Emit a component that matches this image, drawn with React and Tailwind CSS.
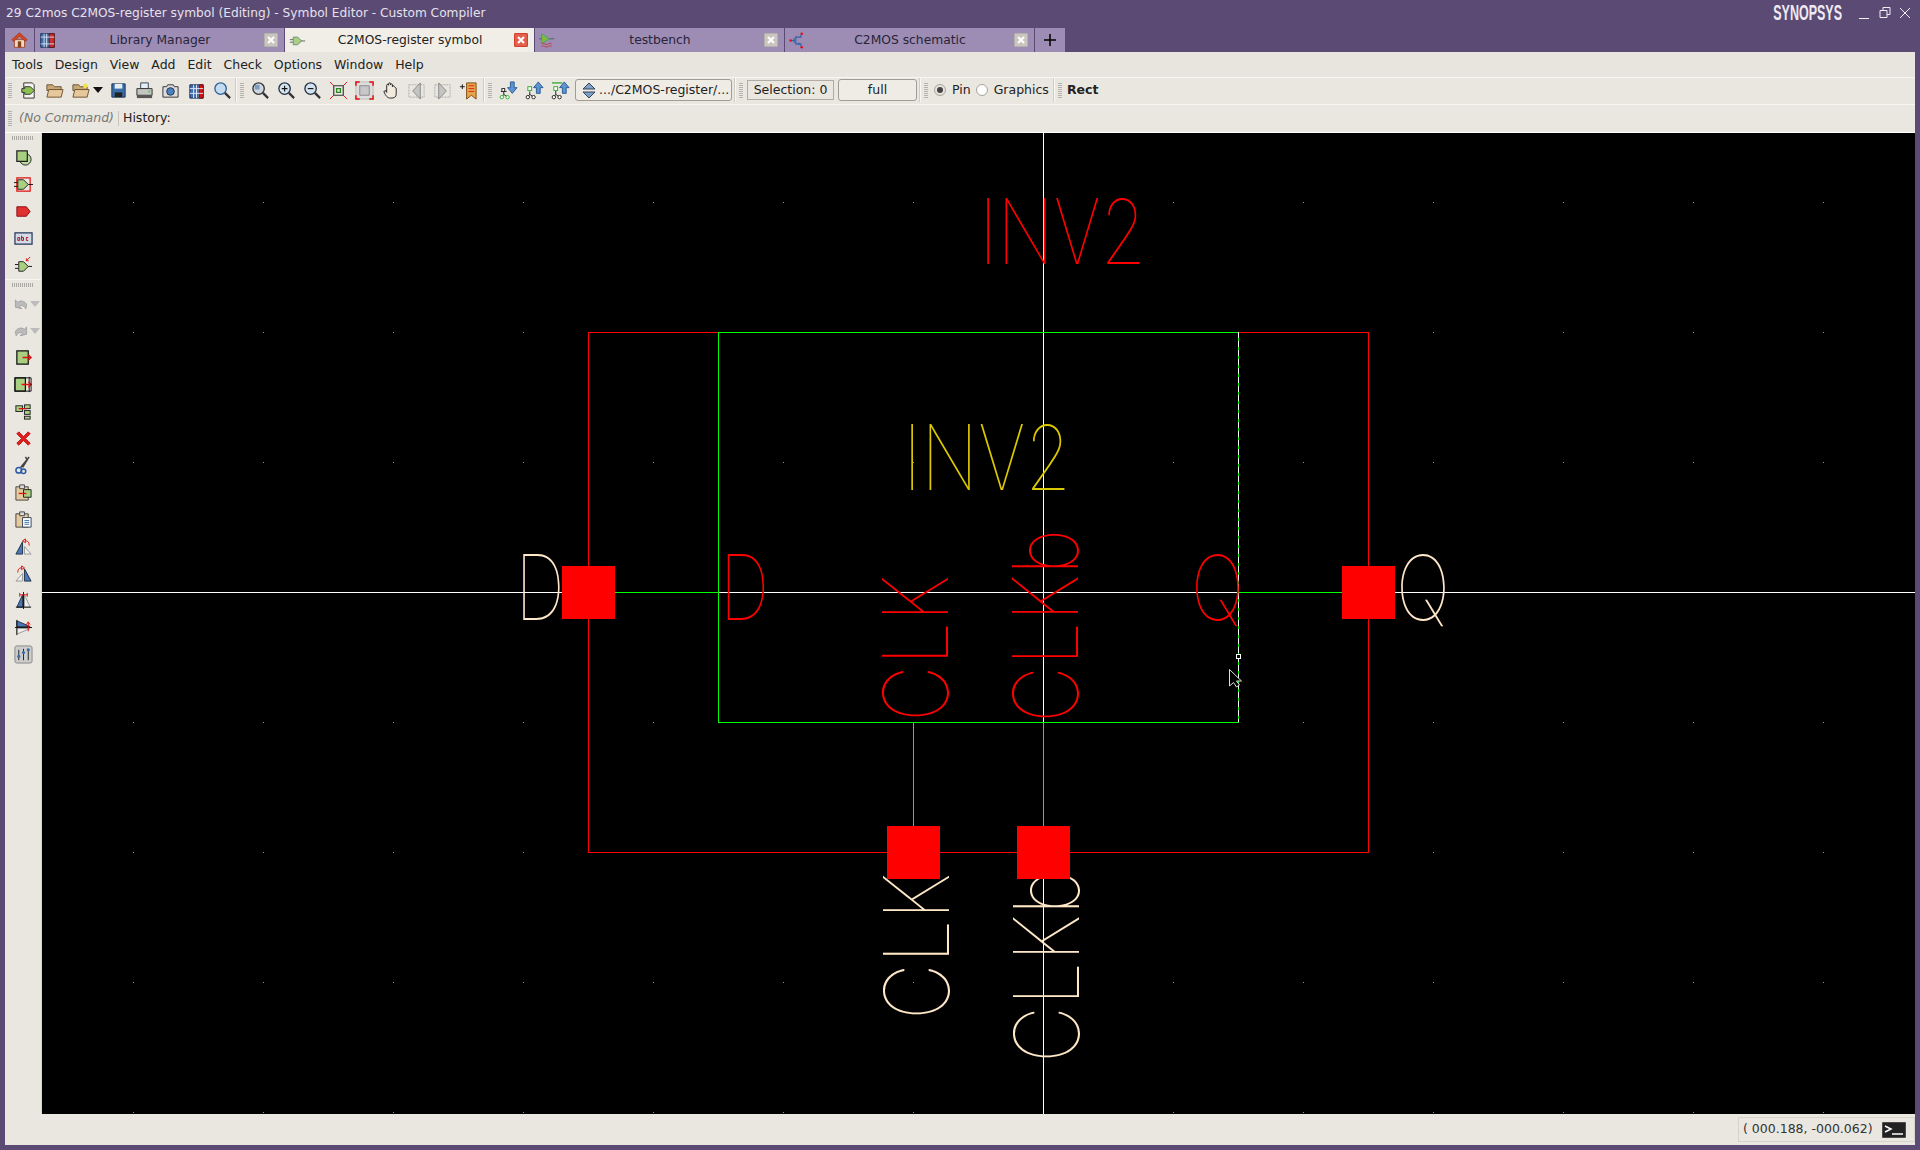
import React from "react";

const Handle = () => (
  <div className="flex flex-col gap-[1px] w-[4px] mx-[3px] shrink-0">
    {[...Array(8)].map((_, i) => <div key={i} className="h-[1px] bg-[#b4b2ac]" />)}
  </div>
);

const Sep = () => <div className="w-[2px] self-stretch border-l border-[#cfccc4] shrink-0 bg-[#f8f7f3]" />;

// toolbar icons, all on a 20x20 box
const icons = {
  newSym: <><path d="M5 2h9l2 2v14H5z" fill="#f4f4f0" stroke="#333" /><path d="M3 8h3V6h6l4 4-4 4H6v-2H3z" fill="#8cc152" stroke="#333" /></>,
  folder: <><path d="M2 4h6l2 2h7v4H2z" fill="#c9a877" stroke="#6e5230" /><path d="M2 17l2-8h15l-2 8z" fill="#e5c89c" stroke="#6e5230" /></>,
  folderStar: <><path d="M2 4h6l2 2h7v4H2z" fill="#c9a877" stroke="#6e5230" /><path d="M2 17l2-8h15l-2 8z" fill="#e5c89c" stroke="#6e5230" /><circle cx="15" cy="5" r="2.5" fill="#f3e24a" /></>,
  save: <><path d="M3 3h14v14H3z" fill="#3a6ea8" stroke="#1a3358" /><path d="M6 3h8v5H6z" fill="#e6edf5" /><path d="M6 12h8v5H6z" fill="#222" /></>,
  print: <><path d="M6 2h8v6H6z" fill="#e8eef6" stroke="#345" /><path d="M2 8h16v7H2z" fill="#c4c4c0" stroke="#333" /><path d="M2 15h16v3H2z" fill="#555" /><circle cx="15" cy="11" r="1" fill="#4c4" /></>,
  camera: <><path d="M2 6h4l1-2h6l1 2h4v11H2z" fill="#ddd" stroke="#333" /><circle cx="10" cy="11" r="4" fill="#4d80c0" stroke="#234" /></>,
  lib: <><path d="M3 4h14v14H3z" fill="#3f6fb0" stroke="#13294d" /><path d="M7 4v14M10 4v14M13 4v14" stroke="#dfe8f4" /><path d="M13 4h4v14h-4z" fill="#d11" stroke="#611" /><path d="M3 8h14M3 13h14" stroke="#dfe8f4" /></>,
  search: <><circle cx="8" cy="8" r="6" fill="#c4dbf2" stroke="#2f5f96" strokeWidth="1.4" /><path d="M12.5 12.5L18 18" stroke="#333" strokeWidth="2.4" /></>,
  zoomFit: <><circle cx="8" cy="8" r="6" fill="#cfd6de" stroke="#333" strokeWidth="1.4" /><path d="M4 4h5v5H4z" fill="#7c9cc0" /><path d="M12.5 12.5L18 18" stroke="#333" strokeWidth="2.4" /></>,
  zoomIn: <><circle cx="8" cy="8" r="6" fill="#d5e2f0" stroke="#234" strokeWidth="1.4" /><path d="M5 8h6M8 5v6" stroke="#111" strokeWidth="1.2" /><path d="M12.5 12.5L18 18" stroke="#333" strokeWidth="2.4" /></>,
  zoomOut: <><circle cx="8" cy="8" r="6" fill="#d5e2f0" stroke="#234" strokeWidth="1.4" /><path d="M5 8h6" stroke="#111" strokeWidth="1.2" /><path d="M12.5 12.5L18 18" stroke="#333" strokeWidth="2.4" /></>,
  fit: <><path d="M5 5h10v10H5z" fill="#e8e6e0" stroke="#333" strokeWidth="1.2" /><path d="M8 8h4v4H8z" fill="#e8e6e0" stroke="#2a8a20" strokeWidth="1.4" /><path d="M1 1l4 4M19 1l-4 4M1 19l4-4M19 19l-4-4" stroke="#e01010" /></>,
  fill: <><path d="M1 1h18v18H1z" fill="#ddd" stroke="#bbb" /><path d="M5 5h10v10H5z" fill="#c8c8c8" stroke="#888" /><path d="M1 5V1h4M15 1h4v4M19 15v4h-4M5 19H1v-4" fill="none" stroke="#e01010" strokeWidth="1.6" /></>,
  hand: <path d="M3 11l2-1 1 2V4.500a1 1 0 012 0V3a1 1 0 012 0v1a1 1 0 012 0v2a1 1 0 012 0l1 1a1 1 0 011 1v6c0 3-2 4-6 4-3 0-5-2-7-7z" fill="#f2eadc" stroke="#222" />,
  prev: <><path d="M2 4h16v13H2z" fill="none" stroke="#aaa" strokeDasharray="2 1" /><path d="M14 2v17L6 10.500z" fill="#c4c4c0" stroke="#888" /></>,
  next: <><path d="M2 4h16v13H2z" fill="none" stroke="#aaa" strokeDasharray="2 1" /><path d="M6 2v17l8-8.500z" fill="#c4c4c0" stroke="#888" /></>,
  bookmark: <><path d="M1 6h5M3.500 3.500v5" stroke="#111" /><path d="M8 2h10v17l-5-4-5 4z" fill="#e8a64a" stroke="#7a4a10" /><path d="M10 5h6M10 8h6M10 11h6" stroke="#d22" /></>,
  hierDown: <><path d="M2 11h6M5 11v3M3 17l2-3 4 3" stroke="#222" fill="none" /><rect x="3" y="8" width="3" height="3" fill="#fff" stroke="#222" /><circle cx="3" cy="17" r="1.800" fill="#fff" stroke="#3a3" /><circle cx="9" cy="17" r="1.800" fill="#fff" stroke="#3a3" /><path d="M12 1h4v6h3l-5 6-5-6h3z" fill="#5b94d0" stroke="#2b5b98" /></>,
  hierUp: <><path d="M5 11v3M3 17l2-3 4 3" stroke="#222" fill="none" /><rect x="3" y="6" width="4" height="4" fill="#fff" stroke="#3a3" /><circle cx="3" cy="17" r="1.800" fill="#fff" stroke="#222" /><circle cx="9" cy="17" r="1.800" fill="#fff" stroke="#222" /><path d="M12 13h4V7h3l-5-6-5 6h3z" fill="#5b94d0" stroke="#2b5b98" /></>,
  hierTop: <><path d="M1 2h11" stroke="#3a3" strokeWidth="1.400" /><path d="M5 10v4M3 17l2-3 4 3" stroke="#222" fill="none" /><rect x="3" y="6" width="4" height="4" fill="#fff" stroke="#3a3" /><circle cx="3" cy="17" r="1.800" fill="#fff" stroke="#222" /><circle cx="9" cy="17" r="1.800" fill="#fff" stroke="#222" /><path d="M12 13h4V7h3l-5-6-5 6h3z" fill="#5b94d0" stroke="#2b5b98" /></>,
  shapes: <><circle cx="12" cy="12" r="6" fill="#bcd9a0" stroke="#222" /><path d="M3 3h11v11H3z" fill="#a8d080" stroke="#222" strokeWidth="1.3" /></>,
  instance: <><path d="M3 3h14v14H3z" fill="none" stroke="#e01010" strokeWidth="1.3" /><path d="M0 8h4M0 12h4M15 10h5" stroke="#111" /><path d="M4 5h6l5 5-5 5H4z" fill="#a8d080" stroke="#222" /></>,
  pin: <path d="M3 5h10l4 5-4 5H3z" fill="#e03030" stroke="#8a1010" />,
  abc: <><path d="M1 4h18v12H1z" fill="#d4dbe8" stroke="#24365a" strokeWidth="1.3" /><path d="M4 12V9h2v3H4M8 7v5h2V9H8M15 9h-2v3h2" fill="none" stroke="#a01818" /></>,
  plug: <><path d="M1 9h4M1 13h4M14 11h5" stroke="#111" /><path d="M5 6h5l5 5-5 5H5z" fill="#a8d080" stroke="#222" /><path d="M17 1l-4 4M13 2.500V5h2.500" stroke="#e01010" fill="none" /></>,
  undo: <path d="M3 14V5l3 3c3-3 9-2 11 3l-1 5c-2-4-6-5-8-3l3 3z" fill="#bbb" stroke="#999" />,
  redo: <path d="M17 14V5l-3 3C11 5 5 6 3 11l1 5c2-4 6-5 8-3l-3 3z" fill="#bbb" stroke="#999" />,
  moveBox: <><path d="M3 3h12v14H3z" fill="#a8d080" stroke="#111" strokeWidth="1.3" /><path d="M9 10h9M15 7l3 3-3 3" stroke="#e01010" strokeWidth="1.4" fill="none" /></>,
  stretch: <><path d="M1 3h11v14H1z" fill="#a8d080" stroke="#111" strokeWidth="1.3" /><path d="M16 2v16" stroke="#111" /><path d="M8 10h10M15 7l3 3-3 3" stroke="#e01010" strokeWidth="1.4" fill="none" /><path d="M1 3h17v14H1z" fill="none" stroke="#111" /></>,
  copyBoxes: <><rect x="2" y="4" width="7" height="6" fill="#a8d080" stroke="#222" /><rect x="11" y="3" width="6" height="4" fill="#a8d080" stroke="#222" /><rect x="11" y="9" width="6" height="4" fill="#a8d080" stroke="#222" /><rect x="11" y="15" width="6" height="3" fill="#a8d080" stroke="#222" /><path d="M5 7h8" stroke="#e01010" strokeWidth="1.4" /></>,
  del: <path d="M3 5l2-2 5 5 5-5 2 2-5 5 5 5-2 2-5-5-5 5-2-2 5-5z" fill="#e02020" stroke="#c01010" />,
  cut: <><path d="M16 1L7 12M12 1l2 3-5 8" stroke="#444" strokeWidth="1.6" fill="none" /><circle cx="5" cy="15" r="3" fill="none" stroke="#2a5aa8" strokeWidth="1.6" /><circle cx="10" cy="16" r="2.400" fill="none" stroke="#2a5aa8" strokeWidth="1.6" /></>,
  clipGreen: <><path d="M2 4h13v14H2z" fill="#e5c9a0" stroke="#444" /><path d="M6 2h5v4H6z" fill="#ddd" stroke="#444" /><path d="M10 7h8v8h-8z" fill="#a8d080" stroke="#222" /><path d="M5 11h8" stroke="#e01010" strokeWidth="1.4" /></>,
  clipDoc: <><path d="M2 4h13v14H2z" fill="#e5c9a0" stroke="#444" /><path d="M6 2h5v4H6z" fill="#ddd" stroke="#444" /><path d="M9 8h9v10H9z" fill="#fff" stroke="#345" /><path d="M11 11h5M11 13h5M11 15h5" stroke="#3a6ea8" /></>,
  mirrorL: <><path d="M2 18L9 5v13z" fill="#4a78b8" stroke="#234" /><path d="M11 18V10l7 8z" fill="#eee" stroke="#999" /><path d="M16 9c0-3-1-5-4-5M12 2v4l-3-2z" stroke="#e01010" fill="none" /></>,
  mirrorR: <><path d="M18 18L11 5v13z" fill="#4a78b8" stroke="#234" /><path d="M9 18V10l-7 8z" fill="#eee" stroke="#999" /><path d="M4 9c0-3 1-5 4-5M8 2v4l3-2z" stroke="#e01010" fill="none" /></>,
  flipV: <><path d="M3 17L9 4v13z" fill="#4a78b8" stroke="#234" /><path d="M11 17V4l6 13z" fill="#eee" stroke="#999" /><path d="M10 1v18M2 17h16" stroke="#111" /><path d="M6 4h8M6 2v4M14 2v4" stroke="#e01010" /></>,
  flipH: <><path d="M3 3l14 6H3z" fill="#4a78b8" stroke="#234" /><path d="M3 11h14L3 17z" fill="#eee" stroke="#999" /><path d="M1 10h18M3 2v16" stroke="#111" /><path d="M15 5v9M13 7l2-3 2 3" stroke="#e01010" fill="none" /></>,
  props: <><rect x="1" y="1" width="18" height="18" rx="2" fill="#ccc" stroke="#888" /><path d="M5 5v11M10 4v12M15 4v12" stroke="#222" /><circle cx="5" cy="12" r="1.7" fill="#3a6ea8" /><circle cx="10" cy="8" r="1.7" fill="#3a6ea8" /><circle cx="15" cy="5" r="1.7" fill="#3a6ea8" /></>,
  home: <><path d="M4 9h12v9H4z" fill="#f0dcc0" stroke="#a03a20" /><path d="M10 1L1 9l2 2 7-6 7 6 2-2z" fill="#d8481f" stroke="#a03a20" /><path d="M8 11h4v7H8z" fill="#8a3f1c" /></>,
  libTab: <><path d="M2 2h16v16H2z" fill="#3f6fb0" stroke="#13294d" /><path d="M6 2v16M9 2v16" stroke="#dfe8f4" /><path d="M12 2h6v16h-6z" fill="#c83030" stroke="#611" /><path d="M2 6h16M2 14h16" stroke="#dfe8f4" /></>,
  symTab: <><path d="M1 9h4M1 12h4M14 10.500h5" stroke="#555" /><path d="M5 6h5l5 4.500L10 15H5z" fill="#a8d080" stroke="#687" /></>,
  benchTab: <><path d="M3 2l9 6-9 6z" fill="#7fb93e" stroke="#3a6" /><path d="M0 8h3M12 8h6" stroke="#555" /><path d="M3 14q2-2 4 0t4 0 4 0M3 17q2-2 4 0t4 0 4 0" stroke="#c33" fill="none" /></>,
  schemTab: <><path d="M2 10h5M8 5v10M6 7v6M8 6h6V3M8 14h6v3M11 13l2 1-2 1" stroke="#2f62a8" strokeWidth="1.300" fill="none" /><circle cx="2" cy="10" r="1.500" fill="#d11" /><circle cx="15" cy="2" r="1.500" fill="#d11" /><circle cx="15" cy="18" r="1.500" fill="#d11" /></>,
};

const Icon = ({ name, size = 20 }) => (
  <svg width={size} height={size} viewBox="0 0 20 20" className="shrink-0">{icons[name]}</svg>
);

const Tool = ({ name }) => (
  <div className="w-[26px] flex justify-center shrink-0"><Icon name={name} size={19} /></div>
);

const CloseBtn = ({ active }) => (
  <div className={`w-[14px] h-[14px] rounded-[1px] flex items-center justify-center border ${active ? "bg-[#e0604c] border-[#d0402c]" : "bg-[#c9c5bf] border-[#b4b0aa]"}`}>
    <svg width="8" height="8" viewBox="0 0 8 8"><path d="M1 1l6 6M7 1L1 7" stroke="#fff" strokeWidth="2" /></svg>
  </div>
);

const Tab = ({ icon, label, active }) => (
  <div className={`flex items-center w-[250px] h-full pl-[4px] pr-[6px] border-r border-[#5a4a74] ${active ? "bg-[#f1eee7]" : "bg-[#9d8db5]"}`}>
    <Icon name={icon} size={17} />
    <span className={`flex-1 text-center text-[12.3px] ${active ? "text-[#222]" : "text-[#2a2438]"}`}>{label}</span>
    <CloseBtn active={active} />
  </div>
);

const leftGroups = [
  ["shapes", "instance", "pin", "abc", "plug"],
  ["undo", "redo", "moveBox", "stretch", "copyBoxes", "del", "cut", "clipGreen", "clipDoc", "mirrorL", "mirrorR", "flipV", "flipH", "props"],
];

const BISQUE = "#ffe8c8";
const gridX = [...Array(14)].map((_, i) => 133 + i * 130);
const gridY = [...Array(8)].map((_, i) => 202 + i * 130);

// real <text> stretched to the length measured in the reference
const Label = ({ x, y, len, fill, children, rotate }) => (
  <text
    x={x}
    y={y}
    fill={fill}
    textLength={len}
    lengthAdjust="spacingAndGlyphs"
    transform={rotate ? `rotate(-90 ${x} ${y})` : undefined}
    className="font-['Inter'] font-thin text-[90px]"
  >
    {children}
  </text>
);

const Canvas = () => (
  <svg className="flex-1 h-full bg-black block" viewBox="42 133 1873 981" width="1873" height="981">
    <g shapeRendering="crispEdges" strokeWidth="1">
      {gridX.map((x) => gridY.map((y) => <rect key={`${x}-${y}`} x={x} y={y} width="1" height="1" fill="#8a94a4" />))}
      <path d="M42 592.5H1915M1043.5 133V1114" stroke="#fff" />
      <path d="M588.5 332.5H1368.5V852.5H588.5z" fill="none" stroke="#f00" />
      <path d="M718.5 332.5H1238.5V722.5H718.5z" fill="none" stroke="#0f0" />
      <path d="M1238.5 332V722" stroke="#fff" strokeDasharray="6 3" />
      <path d="M615 592.5H718M1239 592.5H1342M913.5 722V826M1043.5 722V826" stroke="#0f0" />
    </g>
    <Label x={979} y={264} len={167} fill="#f00">INV2</Label>
    <Label x={903} y={490} len={168} fill="#dcc800">INV2</Label>
    <Label x={515.5} y={620} len={49} fill={BISQUE}>D</Label>
    <Label x={720} y={620} len={49} fill="#f00">D</Label>
    <Label x={1191} y={620} len={53} fill="#f00">Q</Label>
    <Label x={1396} y={620} len={54} fill={BISQUE}>Q</Label>
    <Label x={948} y={722} len={147} fill="#f00" rotate>CLK</Label>
    <Label x={1078} y={723} len={194} fill="#f00" rotate>CLKb</Label>
    <Label x={949} y={1020} len={147} fill={BISQUE} rotate>CLK</Label>
    <Label x={1079} y={1063} len={194} fill={BISQUE} rotate>CLKb</Label>
    <g shapeRendering="crispEdges" fill="#f00">
      <rect x="562" y="566" width="53" height="53" />
      <rect x="1342" y="566" width="53" height="53" />
      <rect x="887" y="826" width="53" height="53" />
      <rect x="1017" y="826" width="53" height="53" />
    </g>
    <rect x="1236.5" y="654.5" width="4" height="4" fill="#000" stroke="#fff" shapeRendering="crispEdges" />
    <path d="M1229.5 669.5V686l4-3.5 3 4.500 3-2-3-4h5z" fill="#000" stroke="#ddd" />
  </svg>
);

export default function App() {
  return (
    <div className="w-[1920px] h-[1150px] overflow-hidden flex flex-col bg-[#5a4a74] font-['DejaVu_Sans',sans-serif] text-[12px] text-[#222]">
      {/* title bar */}
      <div className="h-[28px] flex items-center pl-[6px] pr-[9px] shrink-0 text-[#e6e2ec] text-[12.2px]">
        <span className="flex-1 pb-[1px]">29 C2mos C2MOS-register symbol (Editing) - Symbol Editor - Custom Compiler</span>
        <span className="font-['Liberation_Sans'] font-bold text-[12.5px] text-[#eeeaf2] scale-y-[1.75] mr-[17px] mb-[2px]">SYNOPSYS</span>
        <svg width="52" height="14" viewBox="0 0 52 14" className="mb-[2px]">
          <path d="M0 12.500H10M21 4.500h7v7h-7zM24 4.500V1.500h7v7h-3M41 2l10 10M51 2L41 12" stroke="#f2eff5" fill="none" />
        </svg>
      </div>

      <div className="flex-1 flex flex-col mx-[5px] mb-[5px] min-h-0 bg-[#eae7e0]">
        {/* tabs */}
        <div className="h-[24px] flex shrink-0 bg-[#5a4a74]">
          <div className="w-[30px] bg-[#9d8db5] flex items-center justify-center border-r border-[#5a4a74]"><Icon name="home" size={17} /></div>
          <Tab icon="libTab" label="Library Manager" />
          <Tab icon="symTab" label="C2MOS-register symbol" active />
          <Tab icon="benchTab" label="testbench" />
          <Tab icon="schemTab" label="C2MOS schematic" />
          <div className="w-[30px] bg-[#9d8db5] flex items-center justify-center text-black">
            <svg width="12" height="12" viewBox="0 0 12 12"><path d="M6 0v12M0 6h12" stroke="#000" strokeWidth="1.500" /></svg>
          </div>
        </div>

        {/* menu */}
        <div className="h-[25px] flex items-center pl-[7px] pt-[1px] gap-[11.9px] shrink-0 bg-[#e8e5df] text-[12.5px]">
          {["Tools", "Design", "View", "Add", "Edit", "Check", "Options", "Window", "Help"].map((m) => <span key={m}>{m}</span>)}
        </div>

        {/* toolbar */}
        <div className="h-[28px] flex items-center pb-[2px] shrink-0 bg-[#eae7e0] border-y border-[#f7f6f2]">
          <Handle />
          <Tool name="newSym" /><Tool name="folder" /><Tool name="folderStar" />
          <svg width="10" height="6" viewBox="0 0 10 6" className="mr-[2px]"><path d="M0 0h10L5 6z" fill="#111" /></svg>
          <Tool name="save" /><Tool name="print" /><Tool name="camera" /><Tool name="lib" /><Tool name="search" />
          <Sep />
          <Handle />
          <Tool name="zoomFit" /><Tool name="zoomIn" /><Tool name="zoomOut" /><Tool name="fit" /><Tool name="fill" /><Tool name="hand" /><Tool name="prev" /><Tool name="next" /><Tool name="bookmark" />
          <div className="w-[2px] shrink-0" />
          <Sep />
          <Handle />
          <Tool name="hierDown" /><Tool name="hierUp" /><Tool name="hierTop" />
          <div className="w-[157px] h-[22px] ml-[2px] mr-[2px] rounded-[3px] border border-[#a09c94] bg-[#efece6] flex items-center pl-[7px] gap-[4px] text-[12.5px]">
            <svg width="12" height="15" viewBox="0 0 12 15"><path d="M6 0l6 6H0zM6 15L0 9h12z" fill="#7fa0c8" stroke="#345" /></svg>
            .../C2MOS-register/...
          </div>
          <Sep />
          <Handle />
          <div className="w-[87px] h-[20px] border border-[#b0aca4] flex items-center justify-center ml-[1px] text-[12.5px]">Selection: 0</div>
          <div className="w-[79px] h-[22px] ml-[4px] mr-[2px] rounded-[3px] border border-[#a09c94] bg-[#efece6] flex items-center justify-center text-[12.5px]">full</div>
          <Sep />
          <Handle />
          <div className="w-[12px] h-[12px] rounded-full border border-[#a8a49c] bg-[#e6e3dc] flex items-center justify-center ml-[3px]"><div className="w-[6px] h-[6px] rounded-full bg-[#444]" /></div>
          <span className="ml-[6px] text-[12.5px]">Pin</span>
          <div className="w-[12px] h-[12px] rounded-full border border-[#a8a49c] bg-white ml-[5px]" />
          <span className="ml-[6px] mr-[4px] text-[12.5px]">Graphics</span>
          <Sep />
          <Handle />
          <span className="font-bold text-[12.5px] ml-[2px]">Rect</span>
        </div>

        {/* command line */}
        <div className="h-[28px] flex items-center shrink-0 bg-[#eae7e0] border-b border-white">
          <Handle />
          <span className="italic text-[#777] text-[12.5px] w-[99px] ml-[4px]">(No Command)</span>
          <div className="w-[1px] h-[15px] bg-[#c8c5bd] mr-[4px]" />
          <span className="text-[12.5px]">History:</span>
        </div>

        {/* side toolbar and canvas */}
        <div className="flex-1 flex min-h-0">
          <div className="w-[37px] shrink-0 flex flex-col items-center bg-[#eae7e0] border-r border-[#d8d5cd]">
            {leftGroups.map((group, g) => (
              <div key={g} className={`w-full flex flex-col items-center ${g === 0 ? "pt-[3px] border-b border-[#f8f7f3]" : "pt-[3px]"}`}>
                <div className={`w-[22px] h-[4px] bg-[repeating-linear-gradient(90deg,#aaa8a2_0,#aaa8a2_1px,transparent_1px,transparent_2px)] ${g === 0 ? "mb-[4px]" : "mb-[3px]"}`} />
                {group.map((name) => (
                  <div key={name} className="h-[27px] w-full flex items-center justify-center">
                    {name === "undo" || name === "redo" ? (
                      <div className="flex items-center gap-[1px] ml-[6px]">
                        <Icon name={name} size={16} />
                        <svg width="10" height="6" viewBox="0 0 10 6"><path d="M0 0h10L5 6z" fill="#bbb" /></svg>
                      </div>
                    ) : <Icon name={name} size={19} />}
                  </div>
                ))}
              </div>
            ))}
          </div>
          <Canvas />
        </div>

        {/* status */}
        <div className="h-[31px] flex items-center justify-end shrink-0 bg-[#eae7e0]">
          <div className="w-[177px] h-[25px] border border-[#d6d3cb] flex items-center pl-[4px] gap-[8px] text-[12.5px] text-[#333]">
            <span>( 000.188, -000.062)</span>
            <svg width="24" height="16" viewBox="0 0 24 16" className="ml-auto mr-[8px]">
              <rect width="24" height="16" rx="1" fill="#222" stroke="#777" />
              <path d="M3 4l6 3-6 3M10 12h11" stroke="#fff" strokeWidth="1.500" fill="none" />
            </svg>
          </div>
        </div>
      </div>
    </div>
  );
}
